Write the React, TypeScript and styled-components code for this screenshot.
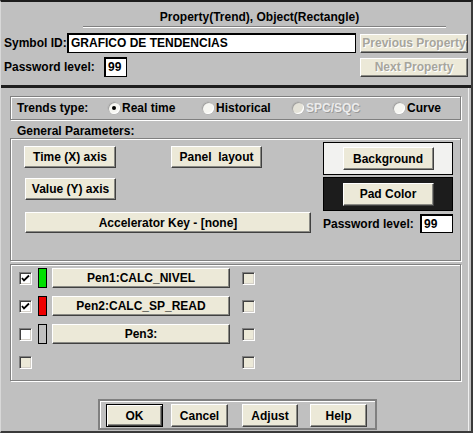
import React from "react";
import styled, { createGlobalStyle, css } from "styled-components";

const Global = createGlobalStyle`
  html, body { margin: 0; padding: 0; background: #c0c0c0; }
  * { box-sizing: border-box; }
  body { font-family: "Liberation Sans", Arial, sans-serif; font-size: 12px; font-weight: bold; color: #000; }
`;

const Window = styled.div`
  width: 473px;
  height: 433px;
  background: #c0c0c0;
  border-top: 2px solid #1c1c1c;
  border-left: 1px solid #d8d8d8;
  border-right: 2px solid #3a3a3a;
  border-bottom: 2px solid #3a3a3a;
  display: flex;
  flex-direction: column;
  overflow: hidden;
`;

const TopSection = styled.div`
  height: 83px;
  padding: 0 0 0 3px;
  display: flex;
  flex-direction: column;
`;

const Title = styled.div`
  margin-left: 79px;
  width: 363px;
  padding: 8px 10px 2px 0;
  line-height: 14px;
  text-align: center;
  border-bottom: 1px solid #808080;
  box-shadow: 0 1px 0 #ffffff;
`;

const FieldRow = styled.div<{ $top: number }>`
  display: flex;
  align-items: center;
  height: 20px;
  margin-top: ${(p) => p.$top}px;
`;

const Label = styled.span<{ $width?: number }>`
  line-height: 14px;
  white-space: nowrap;
  ${(p) => p.$width !== undefined && css`width: ${p.$width}px;`}
`;

const TextBox = styled.div<{ $width: number; $height?: number }>`
  width: ${(p) => p.$width}px;
  height: ${(p) => p.$height ?? 20}px;
  background: #ffffff;
  border: 1px solid #000;
  box-shadow: inset 1px 1px 0 #000;
  padding: 0 0 0 3px;
  display: flex;
  align-items: center;
  line-height: 14px;
  white-space: nowrap;
  overflow: hidden;
`;

const Separator = styled.div`
  height: 3px;
  background: #1e1e1e;
`;

const Main = styled.div`
  flex: 1;
  display: flex;
  flex-direction: column;
  border-right: 1px solid #f0f0f0;
  margin-right: 2px;
`;

const GroupBox = styled.div<{ $top: number; $height: number }>`
  margin: ${(p) => p.$top}px 0 0 9px;
  width: 451px;
  height: ${(p) => p.$height}px;
  border: 1px solid #808080;
  box-shadow: 1px 1px 0 #ffffff, inset 1px 1px 0 #ffffff;
`;

const TrendsBox = styled(GroupBox)`
  display: flex;
  align-items: center;
  padding-left: 6px;
`;

const RadioItem = styled.label<{ $width?: number; $disabled?: boolean }>`
  display: flex;
  align-items: center;
  gap: 2px;
  line-height: 14px;
  ${(p) => p.$width !== undefined && css`width: ${p.$width}px;`}
  ${(p) =>
    p.$disabled &&
    css`
      color: #ececec;
      text-shadow: 1px 1px 0 #9a9a9a;
    `}
`;

const RadioDot = styled.span<{ $checked?: boolean; $disabled?: boolean }>`
  width: 12px;
  height: 12px;
  border-radius: 50%;
  background: ${(p) => (p.$disabled ? "#e4e2d8" : "#f6f6f2")};
  box-shadow: inset 1px 1px 0 #a0a0a0, inset -1px -1px 0 #ffffff, 0 0 0 0.5px #b0b0b0;
  display: flex;
  align-items: center;
  justify-content: center;
  flex: none;
  &::after {
    content: "";
    width: 4px;
    height: 4px;
    border-radius: 50%;
    background: #000;
    display: ${(p) => (p.$checked ? "block" : "none")};
  }
`;

const SectionLabel = styled.div`
  margin: 4px 0 0 16px;
  line-height: 14px;
`;

const GeneralBox = styled(GroupBox)`
  display: flex;
  align-items: flex-start;
  padding: 3px 0 0 13px;
`;

const LeftCol = styled.div`
  width: 287px;
  margin-top: 4px;
  display: flex;
  flex-direction: column;
`;

const RightCol = styled.div`
  width: 130px;
  margin-left: 12px;
  display: flex;
  flex-direction: column;
`;

const BtnRow = styled.div<{ $top?: number; $indent?: number }>`
  display: flex;
  margin-top: ${(p) => p.$top ?? 0}px;
  padding-left: ${(p) => p.$indent ?? 0}px;
`;

const Button = styled.button<{ $width: number; $height?: number; $gap?: number; $default?: boolean }>`
  width: ${(p) => p.$width}px;
  height: ${(p) => p.$height ?? 22}px;
  margin-left: ${(p) => p.$gap ?? 0}px;
  padding: 0;
  font: inherit;
  line-height: 14px;
  color: #000;
  background: #ece9d8;
  border: 1px solid;
  border-color: #ffffff #404040 #404040 #ffffff;
  box-shadow: inset -1px -1px 0 #8a8a84;
  white-space: nowrap;
  flex: none;
  &:disabled {
    color: #a6a59c;
    text-shadow: 1px 1px 0 #ffffff;
  }
  ${(p) =>
    p.$default &&
    css`
      border: 1px solid #000;
      box-shadow: inset 1px 1px 0 #ffffff, inset -1px -1px 0 #404040, inset -2px -2px 0 #8a8a84;
    `}
`;

const ColorPanel = styled.div<{ $bg: string; $top?: number; $height: number }>`
  height: ${(p) => p.$height}px;
  margin-top: ${(p) => p.$top ?? 0}px;
  background: ${(p) => p.$bg};
  border: 1px solid #000;
  display: flex;
  align-items: center;
  justify-content: center;
`;

const PwRow = styled.div`
  margin-top: 3px;
  height: 19px;
  display: flex;
  align-items: center;
  justify-content: space-between;
`;

const PensBox = styled(GroupBox)`
  padding: 3px 0 0 8px;
  display: grid;
  grid-template-columns: 19px 14px 190px 13px;
  grid-auto-rows: 20px;
  row-gap: 8px;
  align-items: center;
`;

const CheckBox = styled.span<{ $disabled?: boolean; $col: number }>`
  grid-column: ${(p) => p.$col};
  width: 13px;
  height: 13px;
  background: ${(p) => (p.$disabled ? "#ece9d8" : "#ffffff")};
  border: 1px solid;
  border-color: #808080 #ffffff #ffffff #808080;
  box-shadow: inset 1px 1px 0 #404040, inset -1px -1px 0 #d4d0c8;
  display: flex;
  align-items: center;
  justify-content: center;
`;

const Swatch = styled.span<{ $color: string }>`
  grid-column: 2;
  width: 9px;
  height: 20px;
  background: ${(p) => p.$color};
  border: 1px solid #000;
`;

const PenButton = styled(Button)`
  grid-column: 3;
`;

const ButtonBar = styled.div`
  margin: 18px 0 0 97px;
  width: 279px;
  height: 31px;
  border: 2px solid #808080;
  box-shadow: inset 1px 1px 0 #ffffff;
  padding: 3px 0 0 6px;
  display: flex;
`;

const Check = () => (
  <svg width="9" height="9" viewBox="0 0 9 9">
    <polyline points="1,4 3,6.5 8,1.5" fill="none" stroke="#000" strokeWidth="1.8" />
  </svg>
);

type Pen = { name: string; color: string; checked: boolean };

const pens: Pen[] = [
  { name: "Pen1:CALC_NIVEL", color: "#00e000", checked: true },
  { name: "Pen2:CALC_SP_READ", color: "#ee0000", checked: true },
  { name: "Pen3:", color: "#c0c0c0", checked: false },
];

export default function App() {
  return (
    <>
      <Global />
      <Window>
        <TopSection>
          <Title>Property(Trend), Object(Rectangle)</Title>
          <FieldRow $top={6}>
            <Label $width={63}>Symbol ID:</Label>
            <TextBox $width={289}>GRAFICO DE TENDENCIAS</TextBox>
            <Button $width={108} $height={19} $gap={4} disabled>
              Previous Property
            </Button>
          </FieldRow>
          <FieldRow $top={4}>
            <Label $width={100}>Password level:</Label>
            <TextBox $width={23}>99</TextBox>
            <Button $width={108} $height={19} $gap={233} disabled>
              Next Property
            </Button>
          </FieldRow>
        </TopSection>
        <Separator />
        <Main>
          <TrendsBox $top={8} $height={24}>
            <Label $width={91}>Trends type:</Label>
            <RadioItem $width={94}>
              <RadioDot $checked />
              Real time
            </RadioItem>
            <RadioItem $width={90}>
              <RadioDot />
              Historical
            </RadioItem>
            <RadioItem $width={101} $disabled>
              <RadioDot $disabled />
              SPC/SQC
            </RadioItem>
            <RadioItem>
              <RadioDot />
              Curve
            </RadioItem>
          </TrendsBox>
          <SectionLabel>General Parameters:</SectionLabel>
          <GeneralBox $top={0} $height={123}>
            <LeftCol>
              <BtnRow>
                <Button $width={92}>Time (X) axis</Button>
                <Button $width={91} $gap={55}>
                  Panel&nbsp; layout
                </Button>
              </BtnRow>
              <BtnRow $top={10} $indent={1}>
                <Button $width={91}>Value (Y) axis</Button>
              </BtnRow>
              <BtnRow $top={12} $indent={1}>
                <Button $width={286} $height={21}>
                  Accelerator Key - [none]
                </Button>
              </BtnRow>
            </LeftCol>
            <RightCol>
              <ColorPanel $bg="#f2f2f0" $height={33}>
                <Button $width={91} $height={23}>
                  Background
                </Button>
              </ColorPanel>
              <ColorPanel $bg="#1c1c1c" $top={2} $height={34}>
                <Button $width={91} $height={23}>
                  Pad Color
                </Button>
              </ColorPanel>
              <PwRow>
                <Label>Password level:</Label>
                <TextBox $width={33} $height={19}>
                  99
                </TextBox>
              </PwRow>
            </RightCol>
          </GeneralBox>
          <PensBox $top={3} $height={117}>
            {pens.map((p) => (
              <React.Fragment key={p.name}>
                <CheckBox $col={1}>{p.checked && <Check />}</CheckBox>
                <Swatch $color={p.color} />
                <PenButton $width={178} $height={20}>
                  {p.name}
                </PenButton>
                <CheckBox $col={4} $disabled />
              </React.Fragment>
            ))}
            <CheckBox $col={1} $disabled />
            <CheckBox $col={4} $disabled />
          </PensBox>
          <ButtonBar>
            <Button $width={57} $height={23} $default>
              OK
            </Button>
            <Button $width={57} $height={23} $gap={8}>
              Cancel
            </Button>
            <Button $width={56} $height={23} $gap={14}>
              Adjust
            </Button>
            <Button $width={57} $height={23} $gap={12}>
              Help
            </Button>
          </ButtonBar>
        </Main>
      </Window>
    </>
  );
}
